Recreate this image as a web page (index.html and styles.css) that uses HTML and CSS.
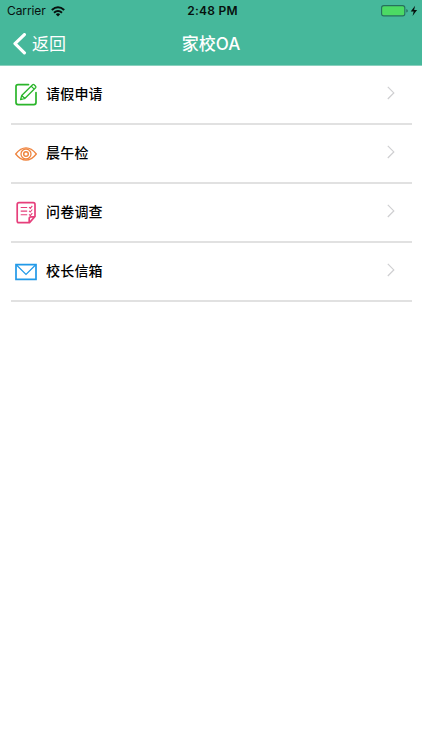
FILE: index.html
```html
<!DOCTYPE html>
<html lang="zh-CN">
<head>
<meta charset="utf-8">
<meta name="viewport" content="width=device-width">
<title>家校OA</title>
<link rel="stylesheet" href="styles.css">
</head>
<body>
<header class="header">
  <div class="status">
    <div class="carrier"><span>Carrier</span>
      <svg class="wifi" width="14" height="11" viewBox="0 0 14 11" fill="none" stroke="#07110e" stroke-width="2"><path d="M.8 4.1Q7-1.5 13.2 4.1M3 6.7q4-3.5 8 0"/><path d="M4.8 8.2Q7 6.5 9.2 8.2L7 10.5Z" fill="#07110e" stroke="none"/></svg>
    </div>
    <span class="time">2:48 PM</span>
    <svg class="battery" width="37" height="12" viewBox="0 0 37 12"><rect x=".6" y=".6" width="23.2" height="10.3" rx="2.2" fill="#4cda64" stroke="#26705e" stroke-width="1.1"/><path d="M25.3 4q1.5.4 1.5 1.8t-1.5 1.8z" fill="#26705e"/><path d="M34.1.8 29.7 6.4h3L31.5 11l4.6-6h-3z" fill="#07110e"/></svg>
  </div>
  <nav class="nav">
    <div class="back">
      <svg width="14" height="22" viewBox="0 0 14 22" fill="none" stroke="#fff" stroke-width="3.2" stroke-linecap="round" stroke-linejoin="round"><path d="M11.4 1.6 2 10.6l9.4 9.2"/></svg>
      <span>返回</span>
    </div>
    <h1 class="title">家校OA</h1>
  </nav>
</header>
<main class="list">
  <div class="row">
    <svg class="icon" width="24" height="24" viewBox="0 0 24 24" fill="none" stroke="#2bb52b" stroke-width="1.7" stroke-linecap="round" stroke-linejoin="round"><path d="M14.5 1.6H4Q2 1.6 2 3.6v16q0 2 2 2h16q2 0 2-2V9.5"/><path d="m7.7 12.5-1.1 4.2 4.2-1.2L21.6 4.7q.7-.8 0-1.5l-1.5-1.5q-.8-.7-1.5 0L7.7 12.5l3.1 3M17.2 3.1l3 3" stroke-width="1.3"/></svg>
    <span class="label">请假申请</span>
    <svg class="chevron" width="8" height="14" viewBox="0 0 8 14"><path d="m.8.8 6 6.1-6 6.1"/></svg>
  </div>
  <div class="row">
    <svg class="icon" width="24" height="24" viewBox="0 0 24 24" fill="none" stroke="#ef8540" stroke-width="1.3"><path d="M1.7 12Q6.5 5.8 12 5.8T22.3 12Q17.5 18.2 12 18.2T1.7 12Z"/><circle cx="12" cy="12" r="5"/><circle cx="12" cy="12" r="2.3" stroke-width="1.5"/></svg>
    <span class="label">晨午检</span>
    <svg class="chevron" width="8" height="14" viewBox="0 0 8 14"><path d="m.8.8 6 6.1-6 6.1"/></svg>
  </div>
  <div class="row">
    <svg class="icon" width="24" height="24" viewBox="0 0 24 24" fill="none" stroke="#e63f7b" stroke-width="1.7" stroke-linejoin="round"><path d="M4.9 1.7h14.4Q21 1.7 21 3.4v12.1l-5.5 6.1H4.9q-1.7 0-1.7-1.7V3.4q0-1.7 1.7-1.7ZM15.2 21.2v-3.5q0-1.8 1.8-1.8h3.7"/><path d="M6.7 6.5h6.5M6.7 10.1h6.5M6.7 13.7h6.5m1.9-7.5 1.2 1.2 2-2.5m-3.2 4.9 1.2 1.2 2-2.5m-3.2 4.9 1.2 1.2 2-2.5" stroke-width="1.1"/></svg>
    <span class="label">问卷调查</span>
    <svg class="chevron" width="8" height="14" viewBox="0 0 8 14"><path d="m.8.8 6 6.1-6 6.1"/></svg>
  </div>
  <div class="row">
    <svg class="icon" width="24" height="24" viewBox="0 0 24 24" fill="none" stroke="#2199e8" stroke-width="1.7"><path d="M2 4.6h20v14.8H2z"/><path d="m2.5 5 9.5 9.4L21.5 5" stroke-width="1.2"/></svg>
    <span class="label">校长信箱</span>
    <svg class="chevron" width="8" height="14" viewBox="0 0 8 14"><path d="m.8.8 6 6.1-6 6.1"/></svg>
  </div>
</main>
</body>
</html>
```
FILE: styles.css
```css
* { box-sizing: border-box; }
body { margin: 0; min-height: 750px; background: #fff; font-family: Inter, "Noto Sans CJK SC", sans-serif; }
svg { display: block; flex: none; }
.header { height: 66px; background: #46b89b; border-bottom: 1px solid #8ad0be; }
.status { height: 22px; padding: 0 5px 0 7px; display: grid; grid-template-columns: 1fr auto 1fr; align-items: center; color: #07110e; font-size: 12px; line-height: 22px; }
.carrier { display: flex; align-items: center; gap: 6px; letter-spacing: -.1px; }
.wifi { margin-left: -1px; }
.time { font-weight: 600; letter-spacing: .25px; padding-left: 1px; }
.battery { justify-self: end; margin-right: -1px; }
.nav { height: 43px; padding: 0 13px; display: grid; grid-template-columns: 1fr auto 1fr; align-items: center; color: #fff; }
.back { display: flex; align-items: center; gap: 5px; font-size: 17px; line-height: 24px; }
.title { margin: 0; font-size: 17px; line-height: 24px; font-weight: 500; }
.list { padding: 0 10px 0 11px; }
.row { height: 59px; padding: 0 17px 0 3px; display: flex; align-items: center; border-bottom: 2px solid #e1e1e1; }
.icon { margin-top: 1px; }
.label { margin: 0 0 1px 8px; flex: 1; color: #000; font-size: 14px; line-height: 20px; font-weight: 500; letter-spacing: .2px; }
.chevron { fill: none; stroke: #cfcfd1; stroke-width: 1.2; margin-bottom: 4px; }
```
